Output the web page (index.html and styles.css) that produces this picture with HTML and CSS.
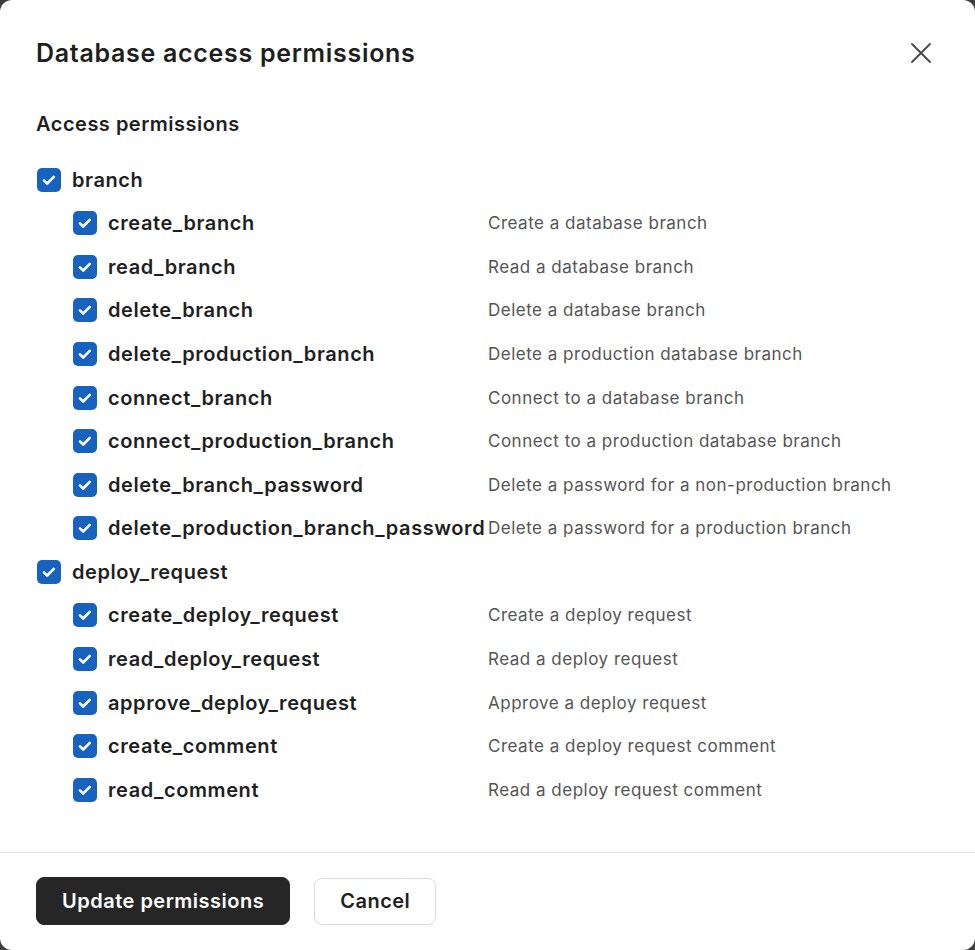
FILE: index.html
```html
<!DOCTYPE html>
<html>
<head>
<meta charset="utf-8">
<link rel="stylesheet" href="styles.css">
</head>
<body>
<div class="modal">
  <div class="header">
    <h1 class="title">Database access permissions</h1>
    <button class="close" aria-label="Close">
      <svg width="22" height="22" viewBox="0 0 22 22"><path d="M2 2L20 20M20 2L2 20" stroke="#4a4a4a" stroke-width="1.9" stroke-linecap="round"/></svg>
    </button>
  </div>
  <div class="body">
    <h2 class="section">Access permissions</h2>
    <div class="group">
      <div class="row parent"><span class="cb"><svg viewBox="0 0 24 24"><path d="M7 12.4l3.2 3.1 6.6-6.6" fill="none" stroke="#fff" stroke-width="2.6" stroke-linecap="round" stroke-linejoin="round"/></svg></span><span class="name">branch</span></div>
      <div class="row child"><span class="cb"><svg viewBox="0 0 24 24"><path d="M7 12.4l3.2 3.1 6.6-6.6" fill="none" stroke="#fff" stroke-width="2.6" stroke-linecap="round" stroke-linejoin="round"/></svg></span><span class="name">create_branch</span><span class="desc">Create a database branch</span></div>
      <div class="row child"><span class="cb"><svg viewBox="0 0 24 24"><path d="M7 12.4l3.2 3.1 6.6-6.6" fill="none" stroke="#fff" stroke-width="2.6" stroke-linecap="round" stroke-linejoin="round"/></svg></span><span class="name">read_branch</span><span class="desc">Read a database branch</span></div>
      <div class="row child"><span class="cb"><svg viewBox="0 0 24 24"><path d="M7 12.4l3.2 3.1 6.6-6.6" fill="none" stroke="#fff" stroke-width="2.6" stroke-linecap="round" stroke-linejoin="round"/></svg></span><span class="name">delete_branch</span><span class="desc">Delete a database branch</span></div>
      <div class="row child"><span class="cb"><svg viewBox="0 0 24 24"><path d="M7 12.4l3.2 3.1 6.6-6.6" fill="none" stroke="#fff" stroke-width="2.6" stroke-linecap="round" stroke-linejoin="round"/></svg></span><span class="name">delete_production_branch</span><span class="desc">Delete a production database branch</span></div>
      <div class="row child"><span class="cb"><svg viewBox="0 0 24 24"><path d="M7 12.4l3.2 3.1 6.6-6.6" fill="none" stroke="#fff" stroke-width="2.6" stroke-linecap="round" stroke-linejoin="round"/></svg></span><span class="name">connect_branch</span><span class="desc">Connect to a database branch</span></div>
      <div class="row child"><span class="cb"><svg viewBox="0 0 24 24"><path d="M7 12.4l3.2 3.1 6.6-6.6" fill="none" stroke="#fff" stroke-width="2.6" stroke-linecap="round" stroke-linejoin="round"/></svg></span><span class="name">connect_production_branch</span><span class="desc">Connect to a production database branch</span></div>
      <div class="row child"><span class="cb"><svg viewBox="0 0 24 24"><path d="M7 12.4l3.2 3.1 6.6-6.6" fill="none" stroke="#fff" stroke-width="2.6" stroke-linecap="round" stroke-linejoin="round"/></svg></span><span class="name">delete_branch_password</span><span class="desc">Delete a password for a non-production branch</span></div>
      <div class="row child"><span class="cb"><svg viewBox="0 0 24 24"><path d="M7 12.4l3.2 3.1 6.6-6.6" fill="none" stroke="#fff" stroke-width="2.6" stroke-linecap="round" stroke-linejoin="round"/></svg></span><span class="name">delete_production_branch_password</span><span class="desc">Delete a password for a production branch</span></div>
      <div class="row parent"><span class="cb"><svg viewBox="0 0 24 24"><path d="M7 12.4l3.2 3.1 6.6-6.6" fill="none" stroke="#fff" stroke-width="2.6" stroke-linecap="round" stroke-linejoin="round"/></svg></span><span class="name">deploy_request</span></div>
      <div class="row child"><span class="cb"><svg viewBox="0 0 24 24"><path d="M7 12.4l3.2 3.1 6.6-6.6" fill="none" stroke="#fff" stroke-width="2.6" stroke-linecap="round" stroke-linejoin="round"/></svg></span><span class="name">create_deploy_request</span><span class="desc">Create a deploy request</span></div>
      <div class="row child"><span class="cb"><svg viewBox="0 0 24 24"><path d="M7 12.4l3.2 3.1 6.6-6.6" fill="none" stroke="#fff" stroke-width="2.6" stroke-linecap="round" stroke-linejoin="round"/></svg></span><span class="name">read_deploy_request</span><span class="desc">Read a deploy request</span></div>
      <div class="row child"><span class="cb"><svg viewBox="0 0 24 24"><path d="M7 12.4l3.2 3.1 6.6-6.6" fill="none" stroke="#fff" stroke-width="2.6" stroke-linecap="round" stroke-linejoin="round"/></svg></span><span class="name">approve_deploy_request</span><span class="desc">Approve a deploy request</span></div>
      <div class="row child"><span class="cb"><svg viewBox="0 0 24 24"><path d="M7 12.4l3.2 3.1 6.6-6.6" fill="none" stroke="#fff" stroke-width="2.6" stroke-linecap="round" stroke-linejoin="round"/></svg></span><span class="name">create_comment</span><span class="desc">Create a deploy request comment</span></div>
      <div class="row child"><span class="cb"><svg viewBox="0 0 24 24"><path d="M7 12.4l3.2 3.1 6.6-6.6" fill="none" stroke="#fff" stroke-width="2.6" stroke-linecap="round" stroke-linejoin="round"/></svg></span><span class="name">read_comment</span><span class="desc">Read a deploy request comment</span></div>
    </div>
  </div>
  <div class="footer">
    <button class="btn primary">Update permissions</button>
    <button class="btn secondary">Cancel</button>
  </div>
</div>
</body>
</html>
```

FILE: styles.css
```css
* { box-sizing: border-box; }
html, body { margin: 0; padding: 0; }
body {
  background: #3d3d3d;
  font-family: Inter, "Noto Sans", sans-serif;
  color: #1f1f1f;
}
.modal {
  width: 975px;
  height: 950px;
  background: #fff;
  border-radius: 12px;
  display: flex;
  flex-direction: column;
}
.header {
  display: flex;
  align-items: center;
  justify-content: space-between;
  padding: 37px 43px 0 36px;
}
.title {
  margin: 0;
  font-size: 25px;
  line-height: 32px;
  font-weight: 600;
  letter-spacing: 0.7px;
}
.close {
  border: 0;
  background: none;
  padding: 0;
  width: 22px;
  height: 22px;
  display: flex;
}
.body {
  flex: 1;
  padding: 41px 36px 0 36px;
}
.section {
  margin: 0 0 20px 0;
  font-size: 20px;
  line-height: 28px;
  font-weight: 600;
  letter-spacing: 0.5px;
}
.group {
  display: flex;
  flex-direction: column;
}
.row {
  height: 43.57px;
  display: flex;
  align-items: center;
}
.child { padding-left: 36px; }
.cb {
  width: 24px;
  height: 24px;
  margin-left: 1px;
  margin-right: 11px;
  border-radius: 5px;
  background: #1762bf;
  display: flex;
  flex: none;
}
.cb svg { width: 24px; height: 24px; }
.name {
  font-size: 20px;
  font-weight: 600;
  letter-spacing: 0.58px;
  color: #1f1f1f;
  white-space: nowrap;
}
.child .name { width: 380px; flex: none; }
.desc {
  font-size: 17px;
  letter-spacing: 0.5px;
  color: #555;
  white-space: nowrap;
}
.footer {
  border-top: 1px solid #e4e4e4;
  padding: 24px 36px 25px 36px;
  display: flex;
  gap: 24px;
  align-items: center;
}
.btn {
  font-family: Inter, "Noto Sans", sans-serif;
  font-size: 20px;
  font-weight: 600;
  letter-spacing: 0.5px;
  height: 48px;
  border-radius: 8px;
  padding: 0 25px;
  cursor: pointer;
}
.primary {
  background: #262626;
  color: #fff;
  border: 1px solid #262626;
}
.secondary {
  background: #fff;
  color: #1f1f1f;
  border: 1px solid #dcdcdc;
  height: 47px;
}
```
